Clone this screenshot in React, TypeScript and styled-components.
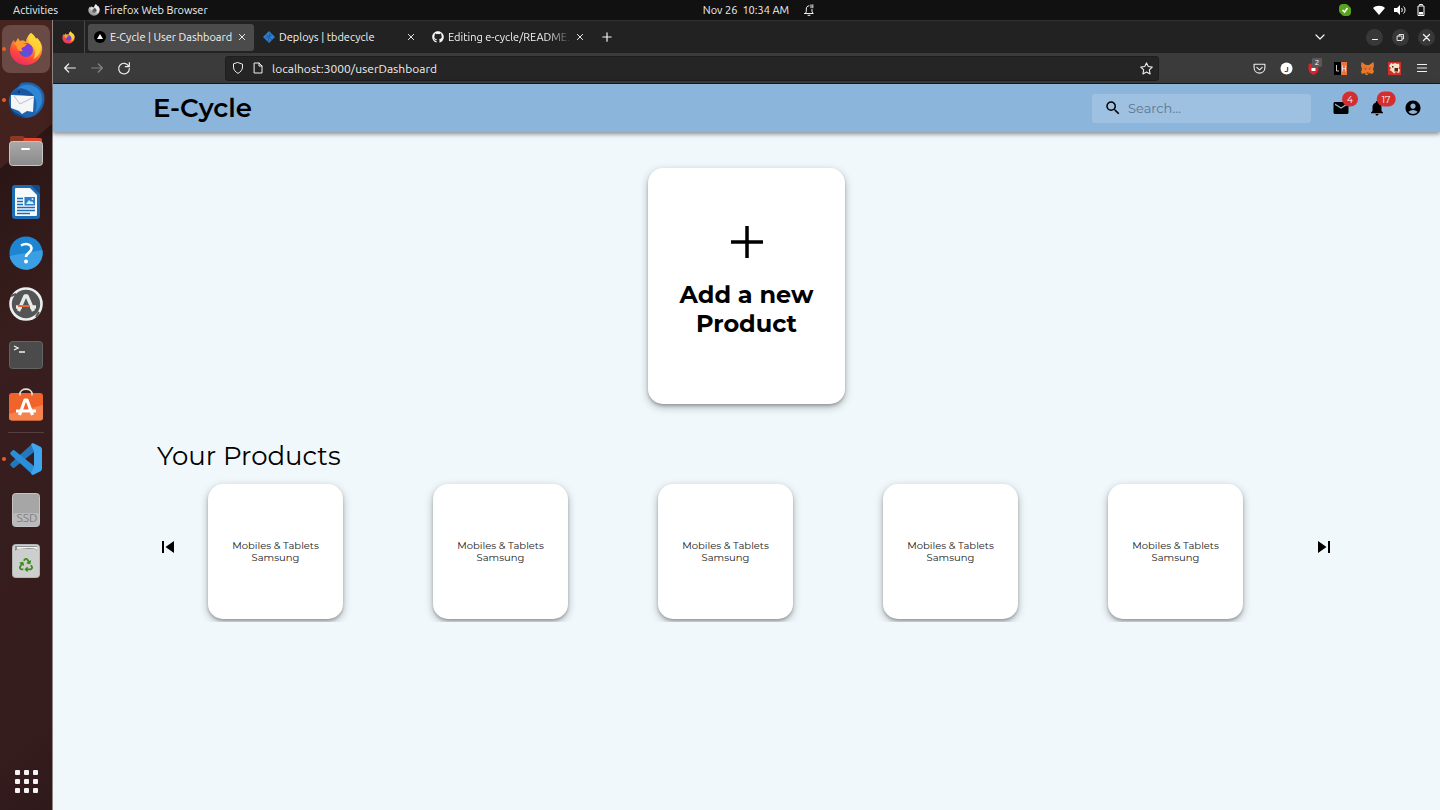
import React from "react";
import styled, { createGlobalStyle, css } from "styled-components";
import {
  MdSearch,
  MdMail,
  MdNotifications,
  MdAccountCircle,
  MdSkipPrevious,
  MdSkipNext,
} from "react-icons/md";
import { FaGithub, FaRecycle } from "react-icons/fa";

const brand = `"Montserrat", Inter, "Liberation Sans", sans-serif`;
const system = `"Ubuntu", "Open Sans", "Noto Sans", sans-serif`;

const GlobalStyle = createGlobalStyle`
  *, *::before, *::after { box-sizing: border-box; }
  body { margin: 0; background: #f0f8fb; font-family: ${system}; }
  button, input { font: inherit; color: inherit; border: 0; padding: 0; background: none; }
  h1, h2, p, ul { margin: 0; padding: 0; }
  ul { list-style: none; }
  svg { display: block; flex: none; }
`;

/* ---------- Desktop shell ---------- */

const Desktop = styled.div`
  min-height: 100vh;
  display: flex;
  flex-direction: column;
`;

const SystemBar = styled.header`
  height: 20px;
  display: grid;
  grid-template-columns: 1fr auto 1fr;
  align-items: center;
  background: #111111;
  color: #f2f2f2;
  font-size: 11px;
  line-height: 20px;
`;

const SystemGroup = styled.div<{ $place?: "clock" | "status" }>`
  display: flex;
  align-items: center;
  gap: 14px;
  padding: 0 13px;
  white-space: pre;
  ${(p) => p.$place === "clock" && css`margin-left: 78px;`}
  ${(p) => p.$place === "status" && css`justify-content: flex-end; gap: 9px;`}
`;

const AppMenu = styled.button`
  display: flex;
  align-items: center;
  gap: 4px;
  margin-left: 16px;
`;

const StatusIcons = styled.div`
  display: flex;
  gap: 9px;
  margin-left: 13px;
`;

const Workspace = styled.div`
  flex: 1;
  display: flex;
`;

const Dock = styled.nav`
  flex: none;
  width: 53px;
  padding: 5px 0 5px 2px;
  display: flex;
  flex-direction: column;
  gap: 3px;
  border-right: 1px solid #8d8484;
  background: linear-gradient(139deg, #47251f 0, #42211e 112px, #2a1615 113px, #381e1d 240px, #351c1d 560px, #2f191b 100%);
`;

const DockItem = styled.button<{ $active?: boolean; $running?: boolean; $last?: boolean }>`
  position: relative;
  width: 48px;
  height: 48px;
  display: grid;
  place-items: center;
  border-radius: 8px;
  background: ${(p) => (p.$active ? "#694a45" : "none")};
  ${(p) => p.$last && css`margin-top: auto;`}
  ${(p) =>
    p.$running &&
    css`
      &::before {
        content: "";
        position: absolute;
        left: 0;
        top: 22px;
        width: 4px;
        height: 4px;
        border-radius: 50%;
        background: #ee5a2b;
      }
    `}
`;

const DockRule = styled.hr`
  width: 36px;
  height: 1px;
  margin: -1px 6px;
  border: 0;
  background: #55403f;
`;

/* ---------- Browser window ---------- */

const BrowserWindow = styled.div`
  flex: 1;
  min-width: 0;
  display: flex;
  flex-direction: column;
`;

const TabStrip = styled.div`
  height: 33px;
  display: flex;
  align-items: center;
  background: #222222;
  color: #f4f4f4;
  font-size: 11px;
  border-top: 1px solid #303030;
`;

const PinnedTab = styled.button`
  align-self: stretch;
  width: 32px;
  display: grid;
  place-items: center;
  border-right: 1px solid #4a4a4a;
`;

const Tab = styled.div<{ $active?: boolean }>`
  width: 166px;
  height: 27px;
  margin-left: 3px;
  padding: 0 8px 0 6px;
  display: flex;
  align-items: center;
  gap: 4px;
  border-radius: 3px;
  background: ${(p) => (p.$active ? "#4b4b4b" : "transparent")};
`;

const TabTitle = styled.button<{ $fade?: boolean }>`
  flex: 1;
  min-width: 0;
  white-space: nowrap;
  text-align: left;
  ${(p) => p.$fade && css`mask-image: linear-gradient(to right, #000 80%, transparent);`}
`;

const IconButton = styled.button`
  display: grid;
  place-items: center;
  &:disabled {
    opacity: 0.4;
  }
`;

const WindowControls = styled.div`
  margin-left: auto;
  padding-right: 5px;
  display: flex;
  align-items: center;
  gap: 9px;
`;

const WindowButton = styled.button`
  width: 17px;
  height: 17px;
  display: grid;
  place-items: center;
  border-radius: 50%;
  background: #383838;
`;

const NewTabButton = styled(WindowButton)`
  margin-left: 6px;
  background: none;
`;

const TabListButton = styled(WindowButton)`
  margin-right: 29px;
  background: none;
`;

const Toolbar = styled.div`
  height: 31px;
  display: flex;
  align-items: center;
  background: #3b3b3b;
  color: #f0f0f0;
  border-bottom: 1px solid #1c1c1c;
`;

const NavButtons = styled.div`
  width: 172px;
  padding-left: 9px;
  display: flex;
  gap: 11px;
`;

const AddressBar = styled.label`
  flex: 1;
  max-width: 934px;
  height: 25px;
  padding: 0 5px 0 6px;
  display: flex;
  align-items: center;
  gap: 8px;
  border: 1px solid #1e1e1e;
  border-radius: 3px;
  background: #252525;
`;

const AddressInput = styled.input`
  flex: 1;
  min-width: 0;
  outline: 0;
  font-size: 12px;
`;

const Extensions = styled.div`
  margin-left: auto;
  padding-right: 12px;
  display: grid;
  grid-auto-flow: column;
  grid-auto-columns: 13px;
  align-items: center;
  gap: 14px;
`;

const BlockerButton = styled(IconButton)`
  position: relative;
`;

const BlockerCount = styled.span`
  position: absolute;
  left: 5px;
  top: -4px;
  width: 10px;
  height: 9px;
  border-radius: 1px;
  background: #55595c;
  color: #fff;
  font-size: 8px;
  line-height: 9px;
`;

/* ---------- E-Cycle page ---------- */

const Page = styled.div`
  flex: 1;
  display: flex;
  flex-direction: column;
  background: #f0f8fb;
  color: #000;
  font-family: ${brand};
`;

const AppBar = styled.header`
  height: 48px;
  padding: 0 18px 0 100px;
  display: flex;
  align-items: center;
  background: #8cb5dc;
  box-shadow: 0 2px 3px rgba(0, 0, 0, 0.2), 0 3px 4px rgba(0, 0, 0, 0.14), 0 1px 8px rgba(0, 0, 0, 0.12);
`;

const Brand = styled.h1`
  font-size: 26px;
  font-weight: 600;
  line-height: 32px;
`;

const SearchBox = styled.label`
  width: 219px;
  height: 29px;
  margin-left: auto;
  padding: 0 12px;
  display: flex;
  align-items: center;
  gap: 6px;
  border-radius: 3px;
  background: #9ec1e2;
`;

const SearchInput = styled.input`
  flex: 1;
  min-width: 0;
  outline: 0;
  font-size: 13px;
  &::placeholder {
    color: #5b7691;
    opacity: 1;
  }
`;

const AppActions = styled.div`
  margin-left: 21px;
  display: flex;
  gap: 18px;
`;

const AppAction = styled.button`
  position: relative;
  width: 18px;
  height: 18px;
`;

const Badge = styled.span`
  position: absolute;
  left: 100%;
  top: 0;
  min-width: 15px;
  height: 15px;
  padding: 0 5px;
  border-radius: 8px;
  transform: translate(-50%, -50%);
  background: #d32f2f;
  color: #fff;
  font-size: 9px;
  line-height: 15px;
  text-align: center;
`;

const Main = styled.main`
  padding: 36px 100px;
  display: flex;
  flex-direction: column;
`;

const AddCard = styled.button`
  align-self: center;
  width: 197px;
  height: 236px;
  padding: 0 28px 9px;
  display: flex;
  flex-direction: column;
  align-items: center;
  justify-content: center;
  gap: 22px;
  border-radius: 15px;
  background: #fff;
  box-shadow: 0 3px 8px rgba(0, 0, 0, 0.28), 0 2px 3px rgba(0, 0, 0, 0.2);
  font-size: 24px;
  font-weight: 700;
  line-height: 29px;
`;

const SectionTitle = styled.h2`
  margin: 36px 4px 0;
  font-size: 26px;
  font-weight: 400;
  line-height: 32px;
`;

const Carousel = styled.section`
  display: flex;
  align-items: center;
  padding: 0 4px 0 3px;
`;

const ProductList = styled.ul`
  flex: 1;
  margin: 0 61px 0 20px;
  padding: 12px 8px 3px;
  overflow: hidden;
  display: flex;
  justify-content: space-between;
`;

const ProductCard = styled.li`
  width: 135px;
  height: 135px;
  display: flex;
  flex-direction: column;
  align-items: center;
  justify-content: center;
  border-radius: 15px;
  background: #fff;
  box-shadow: 0 3px 8px rgba(0, 0, 0, 0.28), 0 2px 3px rgba(0, 0, 0, 0.2);
  color: #222;
  font-size: 10px;
  line-height: 12px;
`;

/* ---------- Drawings ---------- */

const Firefox = ({ size, mono }: { size: number; mono?: boolean }) => {
  const id = `ff${size}${mono ? "m" : ""}`;
  return (
    <svg width={size} height={size} viewBox="0 0 34 34">
      <defs>
        <linearGradient id={id} x1="0.8" y1="0" x2="0.3" y2="1">
          <stop offset="0" stopColor={mono ? "#f4f4f4" : "#fff04a"} />
          <stop offset="0.4" stopColor={mono ? "#cfcfcf" : "#ff9a2a"} />
          <stop offset="0.7" stopColor={mono ? "#b0b0b0" : "#ff4a3c"} />
          <stop offset="1" stopColor={mono ? "#8c8c8c" : "#ee2a64"} />
        </linearGradient>
      </defs>
      <path
        fill={`url(#${id})`}
        d="M22 1c3 2 4 4 5 6l1-1c4 4 6 8 5 13-1 8-8 14-16 14S1 27 1 18c0-4 2-8 4-10l1 3 3-5 2 3c3-1 5 0 6 1 0-3 2-7 5-9z"
      />
      <circle cx="17" cy="18" r="7" fill={mono ? "#555" : "#7a3fdc"} />
      <path fill={mono ? "#777" : "#4c5bd0"} d="M11 19c1 5 7 7 12 2-2 1-4 0-5-1-2-1-4-2-7-1z" />
      <path fill={mono ? "#ddd" : "#ff9c2c"} d="M5 11c3-2 6-2 8 0l5 1-3 3c-3 0-3 3-1 4-3 1-6-1-6-4z" />
      <path
        fill={mono ? "#eee" : "#ffd63a"}
        opacity="0.85"
        d="M22 1c3 2 4 4 5 6l1-1c4 4 5 9 3 14-1 3-4 6-7 7 4-6 2-11-2-14-3-2-4-8 0-12z"
      />
    </svg>
  );
};

const Thunderbird = () => (
  <svg width="37" height="37" viewBox="0 0 37 37">
    <path fill="#1d63ae" d="M13 1c10-3 20 2 23 11 2 9-2 18-10 22-3 1-6 2-9 2C8 35 0 28 1 17 2 11 6 7 10 5c1-2 2-3 3-4z" />
    <path fill="#2f86d3" d="M15 3c8-2 15 2 18 8 3 8 0 15-6 20 2-5 2-11 0-15-2-5-7-7-12-7-4 0-7 2-10 4 1-4 4-7 10-10z" />
    <path fill="#123f7a" d="M1 22c2 7 8 11 17 13-8 2-16-3-17-13z" />
    <path fill="#f4f6f8" d="M3 13l23 1-1 16-6-1-5 3-3-3-8-3z" />
    <path fill="none" stroke="#b9c0ca" strokeWidth="1" d="M6 14l6 8 14-7" />
    <path fill="#1a57a2" d="M4 12c3-5 8-7 12-5 4 1 8 4 10 7z" />
    <circle cx="11" cy="10" r="1" fill="#0d2c55" />
  </svg>
);

const Files = () => (
  <svg width="34" height="34" viewBox="0 0 34 34">
    <defs>
      <linearGradient id="files" x1="0" y1="0" x2="0" y2="1">
        <stop offset="0" stopColor="#a9a9a9" />
        <stop offset="1" stopColor="#8a8a8a" />
      </linearGradient>
    </defs>
    <path fill="#8a3a22" d="M1 4a2 2 0 0 1 2-2h11l2 2h15a2 2 0 0 1 2 2v8H1z" />
    <path fill="#e2442c" d="M15 4h16a2 2 0 0 1 2 2v5H13z" />
    <rect x="0.5" y="7.500" width="33" height="24" rx="3" fill="url(#files)" stroke="#c6c6c6" />
    <rect x="12" y="14" width="9" height="2" rx="1" fill="#fff" />
  </svg>
);

const Writer = () => (
  <svg width="28" height="34" viewBox="0 0 28 34">
    <path fill="#1c6db4" d="M3 0h17l8 8v23a3 3 0 0 1-3 3H3a3 3 0 0 1-3-3V3a3 3 0 0 1 3-3z" />
    <path fill="#f7f9fb" d="M4 3h14l7 7v20a1 1 0 0 1-1 1H4a1 1 0 0 1-1-1V4a1 1 0 0 1 1-1z" />
    <path fill="#114a84" d="M19 0h7a2 2 0 0 1 2 2v7z" />
    <path stroke="#1c6db4" strokeWidth="1.600" d="M5 13.500h6M5 16.500h6M5 19.500h6M5 22.500h18M5 25.500h18M5 28.500h13" />
    <rect x="12.500" y="12" width="10.500" height="8.500" fill="#2a7fc5" />
    <path fill="#d9ecfa" d="M14 19l3-4 2 2 1-1 2 3z" />
    <circle cx="20.500" cy="14" r="1" fill="#d9ecfa" />
  </svg>
);

const Help = () => (
  <svg width="34" height="34" viewBox="0 0 34 34">
    <circle cx="17" cy="17" r="16.500" fill="#1d86d3" />
    <path fill="#3b9fe6" d="M.5 20L33.400 14a16.500 16.500 0 0 1-32.900 6z" />
    <path fill="none" stroke="#fff" strokeWidth="2.600" d="M12 9.500c5-3 10.500-1 10.500 3 0 4-5.500 4.500-5.500 8.500" />
    <circle cx="17" cy="25.500" r="2" fill="#fff" />
  </svg>
);

const Updater = () => (
  <svg width="34" height="34" viewBox="0 0 34 34">
    <circle cx="17" cy="17" r="15.500" fill="#555555" stroke="#eceff0" strokeWidth="2.600" />
    <path stroke="#555" strokeWidth="2" d="M2 9l5-2M27 30l3-5" />
    <path fill="none" stroke="#e6ebec" strokeWidth="3.400" strokeLinejoin="round" d="M9.500 24L16 9h2l6.500 15M7 20h6M21 20h6" />
    <path stroke="#f0672f" strokeWidth="2" d="M9 19h12" />
  </svg>
);

const Terminal = () => (
  <svg width="34" height="28" viewBox="0 0 34 28">
    <rect x="0.5" y="0.5" width="33" height="27" rx="3" fill="#4b4b4b" stroke="#5f6663" />
    <path fill="none" stroke="#f2f2f2" strokeWidth="1.300" d="M5 5l4 2-4 2M10 11h6" />
  </svg>
);

const Software = () => (
  <svg width="34" height="36" viewBox="0 0 34 36">
    <path fill="none" stroke="#eadfcf" strokeWidth="1.600" d="M11 6c0-6.500 12-6.500 12 0" />
    <rect y="5" width="34" height="27.500" rx="3" fill="#f0642c" />
    <path fill="#f58350" d="M0 26l34-9v12.500a3 3 0 0 1-3 3H3a3 3 0 0 1-3-3z" />
    <path fill="none" stroke="#fff" strokeWidth="3.200" strokeLinejoin="round" d="M10.500 27L16 12h2l5.500 15M7 23h20" />
    <path fill="none" stroke="#eadfcf" strokeWidth="1.600" d="M11 4.500v3M23 4.500v3" />
  </svg>
);

const Code = () => (
  <svg width="32" height="32" viewBox="0 0 32 32">
    <path fill="#2378bd" d="M23 0L1 20l-1 2 3 3h1L24 9z" />
    <path fill="#2b8ed8" d="M23 32L1 12l-1-2 3-3h1l20 16z" />
    <path fill="#3fa5ee" d="M23 0l8 4 1 2v20l-1 2-8 4-2-1 3-8V9L21 1z" />
  </svg>
);

const Drive = () => (
  <svg width="28" height="34" viewBox="0 0 28 34">
    <rect x="0.5" y="0.5" width="27" height="33" rx="3" fill="#a6a6a6" stroke="#c4c4c4" />
    <rect x="1" y="20" width="26" height="13" rx="2" fill="#bababa" />
    <text x="15" y="29" textAnchor="middle" fontSize="12" fill="#808080">
      SSD
    </text>
  </svg>
);

const Trash = () => (
  <svg width="28" height="34" viewBox="0 0 28 34">
    <rect x="0.5" y="0.5" width="27" height="33" rx="3" fill="#cdcfce" stroke="#b5b7b6" />
    <path fill="#8d8f8e" d="M3 2h22v5c-2-3-4-2-9-2S6 4 3 7z" />
    <path fill="#f4f4f4" d="M5 3h20v3c-2-2-4-2-9-2s-8 1-11 1z" />
    <FaRecycle x="7" y="14" size={14} color="#3b8c1c" />
  </svg>
);

const AppGrid = () => (
  <svg width="24" height="24" viewBox="0 0 24 24" fill="#f4f4f4">
    {[0, 9, 18].map((y) => [0, 9, 18].map((x) => <rect key={`${x}-${y}`} x={x + 1} y={y + 1} width="5" height="5" rx="1" />))}
  </svg>
);

const Glyph = ({ d, size = 12, width = 1.2 }: { d: string; size?: number; width?: number }) => (
  <svg
    width={size}
    height={size}
    viewBox="0 0 12 12"
    fill="none"
    stroke="currentColor"
    strokeWidth={width}
    strokeLinecap="round"
    strokeLinejoin="round"
  >
    <path d={d} />
  </svg>
);

const Close = ({ size = 8, width = 1.4 }: { size?: number; width?: number }) => (
  <Glyph size={size} width={width} d="M2 2l8 8M10 2l-8 8" />
);

const dockTop = [
  { name: "Firefox", icon: <Firefox size={34} />, active: true, running: true },
  { name: "Thunderbird", icon: <Thunderbird />, running: true },
  { name: "Files", icon: <Files /> },
  { name: "Writer", icon: <Writer /> },
  { name: "Help", icon: <Help /> },
  { name: "Software Updater", icon: <Updater /> },
  { name: "Terminal", icon: <Terminal /> },
  { name: "Ubuntu Software", icon: <Software /> },
];

const dockBottom = [
  { name: "Visual Studio Code", icon: <Code />, running: true },
  { name: "SSD", icon: <Drive /> },
  { name: "Trash", icon: <Trash /> },
];

const products = Array.from({ length: 5 }, () => ({ category: "Mobiles & Tablets", maker: "Samsung" }));

export default function App() {
  return (
    <Desktop>
      <GlobalStyle />
      <SystemBar>
        <SystemGroup>
          <button>Activities</button>
          <AppMenu>
            <Firefox size={12} mono />
            Firefox Web Browser
          </AppMenu>
        </SystemGroup>
        <SystemGroup $place="clock">
          <time>Nov 26  10:34 AM</time>
          <Glyph width={1} d="M1.500 9.500h8.500M2.500 9.500l.8-2V5c0-2 1-3 2.700-3.200M9 5.500v2l.8 2M5 11.300h2M8 .8v3M9.800 .8v3" />
        </SystemGroup>
        <SystemGroup $place="status">
          <svg width="12" height="12" viewBox="0 0 12 12">
            <rect width="10" height="10" rx="4" fill="#5aa31c" />
            <rect x="2" y="2" width="10" height="10" rx="4" fill="#5aa31c" />
            <circle cx="6" cy="6" r="5.500" fill="#5aa31c" />
            <path fill="none" stroke="#fff" strokeWidth="1.500" d="M3.500 6l2 2 3-4" />
          </svg>
          <StatusIcons>
            <svg width="12" height="12" viewBox="0 0 12 12">
              <path fill="#fff" d="M0 4c3-3 9-3 12 0L6 11z" />
            </svg>
            <svg width="12" height="12" viewBox="0 0 12 12" fill="none" stroke="#fff">
              <path fill="#fff" stroke="none" d="M0 4h3l3-3v10L3 8H0z" />
              <path d="M7.500 4c1 1 1 3 0 4M9.500 2.500c2 2 2 5 0 7" />
            </svg>
            <svg width="12" height="12" viewBox="0 0 12 12" fill="none" stroke="#fff">
              <path d="M4.500 1.500V.5h3v1M3 2h6v9.500H3z" />
              <path fill="#fff" stroke="none" d="M4 8h4v2.500H4z" />
            </svg>
          </StatusIcons>
        </SystemGroup>
      </SystemBar>

      <Workspace>
        <Dock aria-label="Dock">
          {dockTop.map((d) => (
            <DockItem key={d.name} aria-label={d.name} $active={d.active} $running={d.running}>
              {d.icon}
            </DockItem>
          ))}
          <DockRule />
          {dockBottom.map((d) => (
            <DockItem key={d.name} aria-label={d.name} $running={d.running}>
              {d.icon}
            </DockItem>
          ))}
          <DockItem $last aria-label="Show applications">
            <AppGrid />
          </DockItem>
        </Dock>

        <BrowserWindow>
          <TabStrip>
            <PinnedTab aria-label="Pinned tab">
              <Firefox size={13} />
            </PinnedTab>
            <Tab $active>
              <svg width="12" height="12" viewBox="0 0 12 12">
                <circle cx="6" cy="6" r="6" fill="#000" />
                <path fill="#fff" d="M6 3l3 5H3z" />
              </svg>
              <TabTitle>E-Cycle | User Dashboard</TabTitle>
              <IconButton aria-label="Close tab"><Close /></IconButton>
            </Tab>
            <Tab>
              <svg width="12" height="12" viewBox="0 0 12 12">
                <path fill="#2b7fd0" d="M6 0l6 6-6 6-6-6z" />
                <path stroke="#1b4f8c" strokeWidth="0.700" d="M3 3l6 6M2 7l7-3M5 11l2-9" />
              </svg>
              <TabTitle>Deploys | tbdecycle</TabTitle>
              <IconButton aria-label="Close tab"><Close /></IconButton>
            </Tab>
            <Tab>
              <FaGithub size={12} />
              <TabTitle $fade>Editing e-cycle/README.</TabTitle>
              <IconButton aria-label="Close tab"><Close /></IconButton>
            </Tab>
            <NewTabButton aria-label="New tab">
              <Glyph d="M6 1.800v8.400M1.800 6h8.400" />
            </NewTabButton>
            <WindowControls>
              <TabListButton aria-label="List all tabs"><Glyph d="M2 4l4 4 4-4" /></TabListButton>
              <WindowButton aria-label="Minimize"><Glyph size={10} width={1.3} d="M3 9h6" /></WindowButton>
              <WindowButton aria-label="Restore"><Glyph size={9} d="M2 4h6v6H2zM4 4V2h6v6H8" /></WindowButton>
              <WindowButton aria-label="Close window"><Close size={9} width={1.6} /></WindowButton>
            </WindowControls>
          </TabStrip>

          <Toolbar>
            <NavButtons>
              <IconButton aria-label="Back"><Glyph size={16} width={0.9} d="M10 6H2M5 3L2 6l3 3" /></IconButton>
              <IconButton aria-label="Forward" disabled><Glyph size={16} width={0.9} d="M2 6h8M7 3l3 3-3 3" /></IconButton>
              <IconButton aria-label="Reload"><Glyph size={16} width={0.9} d="M9.500 4.500A4 4 0 1 0 10 6.500M10 2v3H7" /></IconButton>
            </NavButtons>
            <AddressBar>
              <Glyph width={1} d="M6 .6l4.500 1.600v2.800c0 3-2 5-4.500 6.400C3.500 10 1.500 8 1.500 5V2.200z" />
              <Glyph width={1} d="M2.500 1h4.500l3 3v7H2.500zM7 1v3h3" />
              <AddressInput aria-label="Address" defaultValue="localhost:3000/userDashboard" />
              <Glyph size={13} width={1} d="M6 .8l1.600 3.400 3.700.5-2.700 2.600.7 3.700L6 9.200 2.700 11l.7-3.700L.7 4.700l3.700-.5z" />
            </AddressBar>
            <Extensions>
              <IconButton aria-label="Save to Pocket">
                <Glyph size={13} width={1} d="M1 2h10v3c0 7-10 7-10 0zM3.500 5L6 7.200 8.500 5" />
              </IconButton>
              <IconButton aria-label="Account">
                <svg width="13" height="13" viewBox="0 0 13 13">
                  <circle cx="6.500" cy="6.500" r="6" fill="#fff" />
                  <text x="6.500" y="9.500" textAnchor="middle" fontSize="8" fontWeight="700" fill="#333">J</text>
                </svg>
              </IconButton>
              <BlockerButton aria-label="Content blocker">
                <svg width="13" height="13" viewBox="0 0 13 13">
                  <path fill="#d8232a" d="M6.500 1L11.500 2v5c0 3-2.500 5-5 6-2.500-1-5-3-5-6V2z" />
                  <path fill="#fff" d="M4.500 6h4v3h-4z" />
                </svg>
                <BlockerCount>2</BlockerCount>
              </BlockerButton>
              <IconButton aria-label="Lighthouse">
                <svg width="13" height="13" viewBox="0 0 13 13">
                  <path fill="#000" d="M0 0h7v13H0z" />
                  <path fill="#f0713c" d="M7 0h6v13H7z" />
                  <path fill="none" stroke="#ddd" strokeWidth="0.900" d="M2.500 3v6h2.500M8.500 3.500v6M11.500 3.500v6M8.500 6.500h3" />
                </svg>
              </IconButton>
              <IconButton aria-label="Wallet">
                <svg width="13" height="13" viewBox="0 0 13 13">
                  <path fill="#e8762b" d="M.5 0L5 3h3l4.500-3 .5 4-1 3 1 3-2 2-3-1-1.500 2h-2L4 11l-3 1-1-2 1-3-1-3z" />
                  <path fill="#a94f18" d="M3 5.500l2.500 1-1 1.500zM10 5.500L7.500 6.500l1 1.500zM5.500 10h2v2h-2z" />
                </svg>
              </IconButton>
              <IconButton aria-label="Cookie editor">
                <svg width="13" height="13" viewBox="0 0 13 13">
                  <path fill="#d0302a" d="M0 0h13v13H0z" />
                  <path fill="#f7e3c8" d="M3 1l2 1 2-1 2 1 2-.5.500 3L10.500 6l1.500 2-1 3-3-1-2 1.500L4 9.500 1.500 8 3 6 1 4z" />
                  <path fill="#5a2318" d="M4 4h1.500v1.500H4zM6.500 6H10v3.500H6.500z" />
                </svg>
              </IconButton>
              <IconButton aria-label="Menu"><Glyph d="M1.500 2.500h9M1.500 6h9M1.500 9.500h9" /></IconButton>
            </Extensions>
          </Toolbar>

          <Page>
            <AppBar>
              <Brand>E-Cycle</Brand>
              <SearchBox>
                <MdSearch size={18} />
                <SearchInput type="search" aria-label="Search" placeholder="Search…" />
              </SearchBox>
              <AppActions>
                <AppAction aria-label="Messages"><MdMail size={18} /><Badge>4</Badge></AppAction>
                <AppAction aria-label="Notifications"><MdNotifications size={18} /><Badge>17</Badge></AppAction>
                <AppAction aria-label="Account"><MdAccountCircle size={18} /></AppAction>
              </AppActions>
            </AppBar>
            <Main>
              <AddCard>
                <svg width="32" height="32" viewBox="0 0 32 32" stroke="#000" strokeWidth="3.500">
                  <path d="M16 0v32M0 16h32" />
                </svg>
                Add a new Product
              </AddCard>
              <SectionTitle>Your Products</SectionTitle>
              <Carousel aria-label="Your Products">
                <IconButton aria-label="Previous"><MdSkipPrevious size={24} /></IconButton>
                <ProductList>
                  {products.map((p, i) => (
                    <ProductCard key={i}>
                      <p>{p.category}</p>
                      <p>{p.maker}</p>
                    </ProductCard>
                  ))}
                </ProductList>
                <IconButton aria-label="Next"><MdSkipNext size={24} /></IconButton>
              </Carousel>
            </Main>
          </Page>
        </BrowserWindow>
      </Workspace>
    </Desktop>
  );
}
